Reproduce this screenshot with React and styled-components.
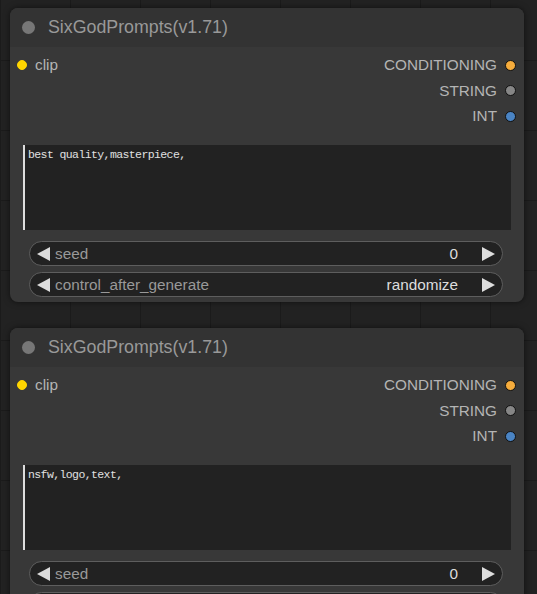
import React from "react"
import styled, { createGlobalStyle } from "styled-components"

const GlobalStyle = createGlobalStyle`
  html, body {
    margin: 0;
    padding: 0;
    overflow: hidden;
    height: 100%;
  }
  body {
    background-color: #222;
    background-image:
      linear-gradient(to right, #1b1b1b 1px, transparent 1px),
      linear-gradient(to bottom, #1b1b1b 1px, transparent 1px);
    background-size: 70px 70px;
    background-position: 0 -10px;
    font-family: "Liberation Sans", Arial, sans-serif;
  }
`

const Canvas = styled.div`
  display: flex;
  flex-direction: column;
  gap: 26px;
  padding: 8px 0 0 10px;
`

const Node = styled.div`
  width: 514px;
  background: #383838;
  border-radius: 8px;
  box-shadow: 0 0 6px rgba(0, 0, 0, 0.55);
  overflow: hidden;
`

const Title = styled.div`
  display: flex;
  align-items: center;
  height: 39px;
  padding-left: 12px;
  background: #333;
  color: #999;
  font-size: 17.8px;
`

const TitleDot = styled.span`
  width: 13px;
  height: 13px;
  border-radius: 50%;
  background: #777;
  margin-right: 13px;
`

const Slots = styled.div`
  display: flex;
  justify-content: space-between;
  padding-top: 5.5px;
`

const Column = styled.div`
  display: flex;
  flex-direction: column;
  align-items: ${p => (p.$right ? "flex-end" : "flex-start")};
`

const Slot = styled.div`
  display: flex;
  align-items: center;
  height: 25.5px;
  gap: 8px;
  color: #b4b4b4;
  font-size: 15.3px;
  padding: ${p => (p.$right ? "0 8px 0 0" : "0 0 0 7px")};
`

const Dot = styled.span`
  width: ${p => (p.$outline ? "11px" : "10px")};
  height: ${p => (p.$outline ? "11px" : "10px")};
  border-radius: 50%;
  box-sizing: border-box;
  background: ${p => p.$color};
  border: 1px solid ${p => (p.$outline ? "#111" : p.$color)};
`

const Prompt = styled.div`
  margin: 16px 13px 0;
  height: 85px;
  box-sizing: border-box;
  background: #222;
  border-left: 2px solid #ddd;
  padding: 3px 3px;
  color: #e0e0e0;
  font-family: "Liberation Mono", "Courier New", monospace;
  font-size: 11.5px;
  letter-spacing: -0.6px;
`

const Widgets = styled.div`
  display: flex;
  flex-direction: column;
  gap: 6px;
  margin: 11px 21px 5px 19px;
`

const Widget = styled.div`
  display: flex;
  align-items: center;
  height: 25px;
  box-sizing: border-box;
  border: 1px solid #5e5e5e;
  border-radius: 13px;
  background: #222;
  padding: 0 7px;
  font-size: 15.3px;
`

const Label = styled.span`
  color: #999;
  margin-left: 5px;
  flex: 1;
`

const Value = styled.span`
  color: #ddd;
  margin-right: 24px;
`

const Arrow = ({ dir }) => (
  <svg width="13" height="14" viewBox="0 0 13 14">
    <polygon
      points={dir === "left" ? "13,0 13,14 0,7" : "0,0 0,14 13,7"}
      fill="#ddd"
    />
  </svg>
)

const outputs = [
  { name: "CONDITIONING", color: "#f5ac3c" },
  { name: "STRING", color: "#868686" },
  { name: "INT", color: "#4a84c4" },
]

const PromptNode = ({ text }) => (
  <Node>
    <Title>
      <TitleDot />
      SixGodPrompts(v1.71)
    </Title>
    <Slots>
      <Column>
        <Slot>
          <Dot $color="#ffd500" />
          clip
        </Slot>
      </Column>
      <Column $right>
        {outputs.map(o => (
          <Slot $right key={o.name}>
            {o.name}
            <Dot $color={o.color} $outline />
          </Slot>
        ))}
      </Column>
    </Slots>
    <Prompt>{text}</Prompt>
    <Widgets>
      <Widget>
        <Arrow dir="left" />
        <Label>seed</Label>
        <Value>0</Value>
        <Arrow dir="right" />
      </Widget>
      <Widget>
        <Arrow dir="left" />
        <Label>control_after_generate</Label>
        <Value>randomize</Value>
        <Arrow dir="right" />
      </Widget>
    </Widgets>
  </Node>
)

export default function App() {
  return (
    <>
      <GlobalStyle />
      <Canvas>
        <PromptNode text="best quality,masterpiece," />
        <PromptNode text="nsfw,logo,text," />
      </Canvas>
    </>
  )
}
